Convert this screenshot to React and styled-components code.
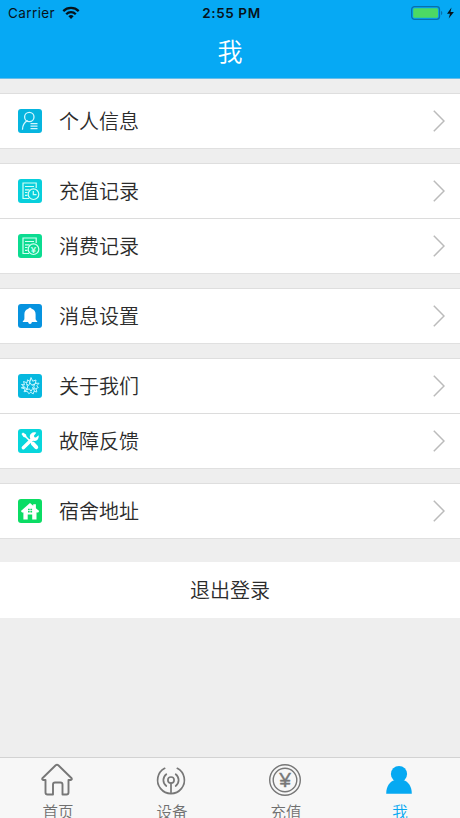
import React, { useState } from 'react';
import styled, { createGlobalStyle } from 'styled-components';

const GlobalStyle = createGlobalStyle`
    * {
        box-sizing: border-box;
    }

    body {
        margin: 0;
        background: #eeeeee;
        font-family: 'Noto Sans CJK SC', sans-serif;
        font-weight: 350;
        overflow: hidden;
    }
`;

const ProfileIcon = () => (
    <svg width="24" height="24" viewBox="0 0 24 24" fill="none" stroke="#d3f6ff" strokeWidth="1.3">
        <circle cx="11.3" cy="8" r="4.7" />
        <path d="M4.5 20.2c.2-4.2 1.700-6.600 4.700-8.400" strokeLinecap="round" />
        <path d="M12.500 14.700h7M12.500 17.200h7M12.500 19.700h7" />
    </svg>
);

const RecordIcon = ({ yen }) => (
    <svg width="24" height="24" viewBox="0 0 24 24" fill="none" stroke="#d2fff5" strokeWidth="1.2">
        <path d="M18.200 9V4H5v15.500h6" />
        <path d="M7 7.500h9M7 10.800h4.500M7 13.500h2.500M7 16.300h2.500" />
        <circle cx="15.500" cy="15.200" r="5.300" />
        {yen ? (
            <text x="15.500" y="18.600" textAnchor="middle" fontSize="9.500" fontFamily="Liberation Sans, sans-serif" fontWeight="700" fill="#d2fff5" stroke="none">¥</text>
        ) : (
            <path d="M15.300 12v3.600h3.200" />
        )}
    </svg>
);

const BellIcon = () => (
    <svg width="24" height="24" viewBox="0 0 24 24" fill="#fff">
        <path d="M12 3.800c.9 0 1.400.4 1.500.9 2.700.6 4.100 2.700 4.100 5.500v4.300c0 1.200.4 1.900 1.600 2.700v.9H4.800v-.9c1.200-.8 1.600-1.500 1.600-2.700v-4.300c0-2.800 1.400-4.900 4.100-5.500.1-.5.600-.9 1.500-.9z" />
        <path d="M10.100 18h3.800c-.2 1.200-.9 1.900-1.900 1.900s-1.700-.7-1.900-1.900z" />
    </svg>
);

const AboutIcon = () => (
    <svg width="24" height="24" viewBox="0 0 24 24" fill="none" stroke="#c5f6ff" strokeWidth="1" strokeLinejoin="round">
        <path d="M3.500 10.500l3 .3L5.500 7.500l3.500 1.300.5-3 2.300 1.700L13 3.500l1.700 3.700 3.300-1.200-.6 3.400 3.700-.2-2.300 2.600 1.500 1.800-2.300 1 .8 3.400-2.800-.7-.8 2.600-2.400-1.600-2 1.400-1.500-2.400-3.300.4 1.100-2.700-3.800-1.200 3-1.200z" />
        <path d="M8.500 9.500l2 2.200 1.500-3 1.700 2.400 3-1.200-1 3 1.800 2.200-3-.4-1.500 2.600-1.600-2.400-3 .8 1.300-2.600z" />
        <path d="M4.500 13l4.500 1.500M7 17l3-2.500M16.500 17l-2-4M18.500 9l-4 2.500M12.500 5l-1 4" />
    </svg>
);

const RepairIcon = () => (
    <svg width="24" height="24" viewBox="0 0 24 24" fill="none" stroke="#fff" strokeLinecap="round">
        <path d="M5.300 18.700l8.500-8.200" strokeWidth="3.400" />
        <path d="M18.300 3.800l-2.400 2.900.5 1.500 1.500.4 2.700-2.300c.3 1.900-.1 3.400-1.100 4.400-1.300 1.300-3.300 1.600-5.200.8L12 9.100c-.5-1.800-.1-3.400 1-4.400 1.500-1.400 3.300-1.700 5.300-.9z" fill="#fff" stroke="none" />
        <path d="M3.500 4.900l1.500-1.400 3 2 .5 2-1 1-2-.6z" fill="#fff" stroke="none" />
        <path d="M7 7l7 7" strokeWidth="1.500" />
        <path d="M14.900 14.700l3.300 3.500" strokeWidth="4" />
    </svg>
);

const HouseIcon = ({ color }) => (
    <svg width="24" height="24" viewBox="0 0 24 24" fill="#fff">
        <path d="M12 4l3.200 2.800V5.200h2.700v4l3.300 2.900-1 1.400h-1.700v7.100h-4.300v-5.100H9.700v5.100H5.400v-7.100H4L2.900 12z" />
        <path d="M10 9.800h1.700v1.500H10zM12.400 9.800h1.700v1.500h-1.700zM10 12h1.700v1.500H10zM12.400 12h1.700v1.500h-1.700z" fill={color} />
    </svg>
);

const ChevronIcon = () => (
    <svg width="12" height="24" viewBox="0 0 12 24" fill="none" stroke="#bbb" strokeWidth="1.500">
        <path d="M.8 1.700L11 12 .8 22.300" />
    </svg>
);

const TabHomeIcon = () => (
    <svg width="34" height="34" viewBox="0 0 34 34" fill="none" stroke="#777" strokeWidth="1.900" strokeLinejoin="round">
        <path d="M15.700 2.300Q17 1.100 18.300 2.300L31.600 15.200Q32.300 16.700 30.700 17H28.500V29.500Q28.500 31.500 26.500 31.500H22.500V21.500Q22.500 19.500 20.500 19.500H15Q13 19.500 13 21.500V31.500H7.500Q5.500 31.500 5.500 29.500V17H3.300Q1.700 16.700 2.400 15.200Z" />
    </svg>
);

const TabDeviceIcon = () => (
    <svg width="34" height="34" viewBox="0 0 34 34" fill="none" stroke="#777" strokeWidth="1.700" strokeLinecap="round">
        <path d="M10.700 5.300A13.400 13.400 0 1 0 23.300 5.300" />
        <path d="M12.300 11.200a7.400 7.400 0 0 0 0 11.800M21.700 11.200a7.400 7.400 0 0 1 0 11.800" />
        <circle cx="17" cy="17.100" r="3.100" />
        <path d="M17 20.500V29.600" />
    </svg>
);

const TabMoneyIcon = () => (
    <svg width="34" height="34" viewBox="0 0 34 34" fill="none" stroke="#777" strokeWidth="1.400">
        <circle cx="17" cy="17" r="15.300" />
        <circle cx="17" cy="17" r="11.800" />
        <text x="17" y="24.400" textAnchor="middle" fontSize="21" fontFamily="Liberation Sans, sans-serif" fontWeight="400" fill="#777" strokeWidth="0.400">¥</text>
    </svg>
);

const TabMeIcon = () => (
    <svg width="34" height="34" viewBox="0 0 34 34" fill="#06a9f2">
        <circle cx="17" cy="11" r="8.100" />
        <path d="M4.200 30.700c0-7.200 3.300-12 8.500-13.700h8.600c5.200 1.700 8.500 6.500 8.500 13.700z" />
    </svg>
);

const groups = [
    [{ title: '个人信息', color: '#06b5df', icon: <ProfileIcon /> }],
    [
        { title: '充值记录', color: '#08cfdc', icon: <RecordIcon /> },
        { title: '消费记录', color: '#0bdc91', icon: <RecordIcon yen /> },
    ],
    [{ title: '消息设置', color: '#0793df', icon: <BellIcon /> }],
    [
        { title: '关于我们', color: '#06b8df', icon: <AboutIcon /> },
        { title: '故障反馈', color: '#08d6dc', icon: <RepairIcon /> },
    ],
    [{ title: '宿舍地址', color: '#0bdc64', icon: <HouseIcon color="#0bdc64" /> }],
];

const tabs = [
    { name: '首页', icon: <TabHomeIcon /> },
    { name: '设备', icon: <TabDeviceIcon /> },
    { name: '充值', icon: <TabMoneyIcon /> },
    { name: '我', icon: <TabMeIcon /> },
];

const App = () => {
    const [active, setActive] = useState('我');

    return (
        <Screen>
            <GlobalStyle />
            <Header>
                <StatusBar>
                    <Carrier>
                        Carrier
                        <svg width="18" height="14" viewBox="0 0 18 14" fill="none" stroke="#06131b" strokeWidth="2.300">
                            <path d="M1.300 5.100a11 11 0 0 1 15.400 0M4.200 8.200a6.800 6.800 0 0 1 9.600 0" />
                            <path d="M9 13l-2.600-2.800a3.700 3.700 0 0 1 5.200 0z" fill="#06131b" stroke="none" />
                        </svg>
                    </Carrier>
                    <Time>2:55 PM</Time>
                    <Battery>
                        <svg width="44" height="14" viewBox="0 0 44 14">
                            <rect x="0.700" y="0.700" width="27.800" height="12.600" rx="2.800" fill="none" stroke="#0870ad" strokeWidth="1.300" />
                            <rect x="2.200" y="2.200" width="24.800" height="9.600" rx="1.300" fill="#4cd964" />
                            <path d="M30 5v4c1.700-.5 1.700-3.500 0-4z" fill="#0870ad" />
                            <path d="M40.500 1.500L36 7.800h3l-1.300 4.700 5.200-6.400h-3.400z" fill="#06131b" />
                        </svg>
                    </Battery>
                </StatusBar>
                <Title>我</Title>
            </Header>

            <Content>
                {groups.map((rows) => (
                    <Group key={rows[0].title}>
                        {rows.map((row) => (
                            <Row key={row.title}>
                                <IconBox $color={row.color}>{row.icon}</IconBox>
                                <RowTitle>{row.title}</RowTitle>
                                <ChevronIcon />
                            </Row>
                        ))}
                    </Group>
                ))}
                <LogoutButton>退出登录</LogoutButton>
            </Content>

            <TabBar>
                {tabs.map((tab) => (
                    <Tab key={tab.name} $active={tab.name === active} onClick={() => setActive(tab.name)}>
                        {tab.icon}
                        <span>{tab.name}</span>
                    </Tab>
                ))}
            </TabBar>
        </Screen>
    );
};

const Screen = styled.div`
    display: flex;
    flex-direction: column;
    width: 460px;
    height: 818px;
    overflow: hidden;
    background: #eeeeee;
`;

const Header = styled.header`
    flex: none;
    height: 79px;
    background: #06a9f4;
    border-bottom: 1px solid #68bde9;
`;

const StatusBar = styled.div`
    display: grid;
    grid-template-columns: 1fr auto 1fr;
    align-items: center;
    height: 26px;
    padding: 0 5px 0 8px;
    color: #06131b;
    font-family: Inter, sans-serif;
    font-size: 13.5px;
    font-weight: 400;
`;

const Carrier = styled.div`
    display: flex;
    align-items: center;
    gap: 7px;
    letter-spacing: 0.4px;
`;

const Time = styled.div`
    font-weight: 600;
    letter-spacing: 0.6px;
`;

const Battery = styled.div`
    display: flex;
    justify-content: flex-end;
`;

const Title = styled.h1`
    margin: 0;
    height: 52px;
    line-height: 49px;
    color: #fff;
    font-size: 25px;
    font-weight: 350;
    text-align: center;
`;

const Content = styled.main`
    flex: 1;
    min-height: 0;
    padding-top: 14px;
`;

const Group = styled.section`
    margin-bottom: 14px;
    background: #fff;
    border-top: 1px solid #dedede;
`;

const Row = styled.div`
    display: flex;
    align-items: center;
    height: 55px;
    padding: 0 15px 0 18px;
    border-bottom: 1px solid #dcdcdc;

    &:last-child {
        border-bottom-color: #e0e0e0;
    }
`;

const IconBox = styled.div`
    display: flex;
    width: 24px;
    height: 24px;
    border-radius: 3px;
    background: ${props => props.$color};
`;

const RowTitle = styled.span`
    flex: 1;
    margin-left: 17px;
    padding-bottom: 1px;
    color: #2b2b2b;
    font-size: 20px;
    line-height: 30px;
`;

const LogoutButton = styled.button`
    display: block;
    width: 100%;
    height: 56px;
    margin-top: 23px;
    padding: 0 0 2px;
    border: none;
    background: #fff;
    color: #2b2b2b;
    font-family: inherit;
    font-size: 20px;
    font-weight: 350;
`;

const TabBar = styled.nav`
    display: flex;
    flex: none;
    height: 61px;
    background: #f7f7f7;
    border-top: 1px solid #d2d2d2;
`;

const Tab = styled.div`
    display: flex;
    flex-direction: column;
    align-items: center;
    width: 114px;
    padding-top: 5px;
    color: ${props => (props.$active ? '#06a9f2' : '#707070')};

    svg {
        flex: none;
    }

    span {
        margin: 2px 0 0 2px;
        font-size: 15.5px;
        line-height: 24px;
    }
`;

export default App;
